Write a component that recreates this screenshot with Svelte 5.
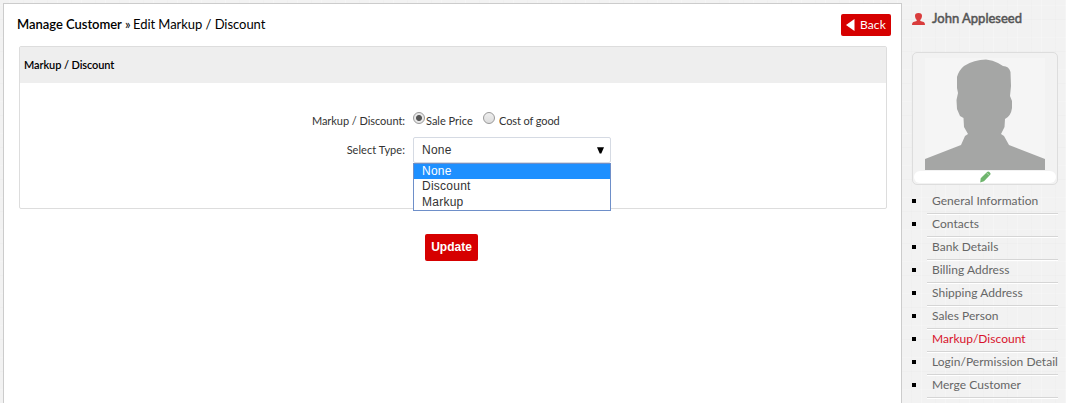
<script>
  const links = ['General Information', 'Contacts', 'Bank Details', 'Billing Address', 'Shipping Address', 'Sales Person', 'Markup/Discount', 'Login/Permission Detail', 'Merge Customer'];
  const types = ['None', 'Discount', 'Markup'];
  const active = 'Markup/Discount';
  const selected = 'None';
</script>

<div class="page">
  <main>
    <div class="top">
      <h1><b>Manage Customer</b><span class="sep">»</span><span class="crumb">Edit Markup / Discount</span></h1>
      <button class="back">
        <svg width="9" height="12" viewBox="0 0 9 12"><path d="M8.5 0V12L0 6Z" fill="#fff" /></svg>
        <span>Back</span>
      </button>
    </div>
    <section>
      <h2><span>Markup / Discount</span></h2>
      <div class="row first">
        <span class="label">Markup / Discount:</span>
        <i class="radio on"></i><span class="sale">Sale Price</span>
        <i class="radio second"></i><span class="cost">Cost of good</span>
      </div>
      <div class="row">
        <span class="label type">Select Type:</span>
        <div class="select">
          <span>{selected}</span>
          <svg width="7" height="7" viewBox="0 0 7 7"><path d="M0 .3H7L4.3 6.5H2.7Z" /></svg>
          <ul class="menu">
            {#each types as t}<li class:chosen={t === selected}>{t}</li>{/each}
          </ul>
        </div>
      </div>
    </section>
    <button class="update">Update</button>
  </main>
  <aside>
    <div class="user">
      <svg width="13" height="12" viewBox="0 0 13 12"><path d="M6.500 0C4 0 2.900 1 3 3C3.100 5 4 6.100 4.700 6.900V8L1.300 9.100Q0 9.700 0 12H13Q13 9.700 11.700 9.100L8.300 8V6.900C9 6.100 9.900 5 10 3C10.100 1 9 0 6.500 0Z" fill="#d93c3c" /></svg>
      <span>John Appleseed</span>
    </div>
    <div class="avatar">
      <svg class="person" width="120" height="112" viewBox="0 0 120 112">
        <rect width="120" height="112" fill="#f5f5f5" />
        <path d="M0 112V101L36 87L40 78L43 76L39 69L38.500 60L35 58L32 51L31.500 42L33 35L32 30V19Q34 12 39 8Q49 1.500 61 1.500Q68 2 73 5L78 8Q84 8 85.500 14L86 28L85 38L87 43V50Q86 58 80 61L79.500 69L76 76L79 78L84 87L120 101V112Z" fill="#a5a6a5" />
      </svg>
      <div class="edit">
        <svg width="11" height="12" viewBox="0 0 11 12"><path d="M.2 11.500L.7 7.300L7.100 1Q8 0 9 .8L10.300 2Q11 3 10.200 3.800L4 10.200Z" fill="#6fb56d" /><path d="M6.800 2L9.200 4.400" stroke="#dcefdc" stroke-width=".6" /></svg>
      </div>
    </div>
    <nav>
      {#each links as link}
        <div class="item"><i></i><a class:active={link === active} href="#top"><span>{link}</span></a></div>
      {/each}
    </nav>
  </aside>
</div>

<style>
  :global(body) { margin: 0; }
  .page {
    box-sizing: border-box; width: 1066px; height: 403px; overflow: hidden;
    display: flex; padding: 3px 0 0 3px;
    background:
      repeating-linear-gradient(90deg, transparent 0 9px, #ffffff44 9px 10px, transparent 10px 23px, #e9e9e944 23px 24px),
      repeating-linear-gradient(0deg, #f2f2f2 0 13px, #f4f4f4 13px 14px, #f2f2f2 14px 31px, #efefef 31px 32px);
    font-family: Lato, sans-serif; color: #333;
  }
  main { box-sizing: border-box; width: 899px; height: 410px; flex: none; background: #fff; border: 1px solid #ccc; padding: 0 14px 0 15px; }
  button { border: 0; border-radius: 2px; background: #d60000; color: #fff; padding: 0; }
  .top { height: 42px; display: flex; justify-content: space-between; margin-left: -2px; }
  h1 { display: flex; margin: 10px 0 0; font-size: 13px; line-height: 20px; font-weight: 400; color: #000; white-space: nowrap; }
  h1 b { width: 105px; font-weight: 600; letter-spacing: -.03px; }
  .sep { width: 8px; margin-left: 3px; }
  .crumb { letter-spacing: -.05px; }
  .back { width: 50px; height: 22px; margin: 10px -4px 0 0; display: flex; align-items: center; padding-left: 5px; gap: 5px; font: 12px/22px Lato, sans-serif; letter-spacing: .1px; }
  section { box-sizing: border-box; width: 868px; height: 163px; border: 1px solid #ddd; border-radius: 2px; }
  h2 { margin: 0; height: 36px; background: #eee; padding-left: 4px; font-size: 11px; line-height: 36px; font-weight: 600; letter-spacing: -.1px; color: #000; }
  .row { display: flex; align-items: center; height: 26px; font-size: 11px; color: #333; white-space: nowrap; }
  .first { height: 17px; padding: 29px 0 8px; }
  .label { width: 385px; margin-right: 8px; text-align: right; letter-spacing: -.05px; }
  .type { margin-top: -2px; letter-spacing: .05px; }
  .radio { box-sizing: border-box; width: 12px; height: 12px; border: 1px solid #999; border-radius: 50%; background: linear-gradient(#eee, #ddd); margin-top: -5px; }
  .radio.on { background: radial-gradient(circle, #555 0 2.500px, #e8e8e8 3.500px); }
  .sale { margin-left: 1px; width: 57px; }
  .cost { margin-left: 4px; letter-spacing: -.1px; }
  .select { position: relative; box-sizing: border-box; width: 198px; height: 26px; border: 1px solid #d5dae3; border-radius: 2px; display: flex; align-items: center; justify-content: space-between; padding: 0 6px 0 8px; font: 12px/16px "Liberation Sans", sans-serif; letter-spacing: .25px; }
  .menu { position: absolute; z-index: 1; top: 25px; left: -1px; box-sizing: border-box; width: 198px; height: 48px; margin: 0; padding: 0; border: 1px solid #6e8fc9; background: #fff; list-style: none; }
  li { height: 15px; padding-left: 8px; line-height: 15px; }
  li:nth-child(2) { line-height: 13px; }
  li.chosen { height: 16px; background: linear-gradient(#1e90ff 15px, #fff 15px); color: #fff; }
  .update { display: block; width: 53px; height: 27px; margin: 25px 0 0 406px; font: bold 12px/27px "Liberation Sans", sans-serif; }
  aside { width: 164px; flex: none; }
  .user { display: flex; align-items: center; gap: 7px; padding: 5px 0 0 10px; height: 20px; font-size: 13px; color: #555; -webkit-text-stroke: .5px #555; }
  .user svg { margin-top: 1px; -webkit-text-stroke: 0; }
  .avatar { box-sizing: border-box; width: 146px; height: 133px; margin: 24px 0 0 10px; border: 1px solid #ddd; border-radius: 5px; padding: 5px 1px 0; background: #f2f2f2; }
  .person { display: block; margin-left: 11px; }
  .edit { height: 12px; margin-top: 1px; background: #fff; border-radius: 6px; display: flex; justify-content: center; }
  nav { padding: 6px 0 0 10px; }
  .item { display: flex; align-items: center; height: 23px; }
  .item i { width: 4px; height: 4px; background: #000; margin: -3px 11px 0 0; }
  a { box-sizing: border-box; width: 131px; height: 23px; padding-left: 5px; border-bottom: 1px solid #d5d5d5; box-shadow: 0 1px #fff; color: #666; font-size: 12px; line-height: 19px; letter-spacing: .03px; text-decoration: none; white-space: nowrap; }
  a.active { color: #d8122c; }
</style>
